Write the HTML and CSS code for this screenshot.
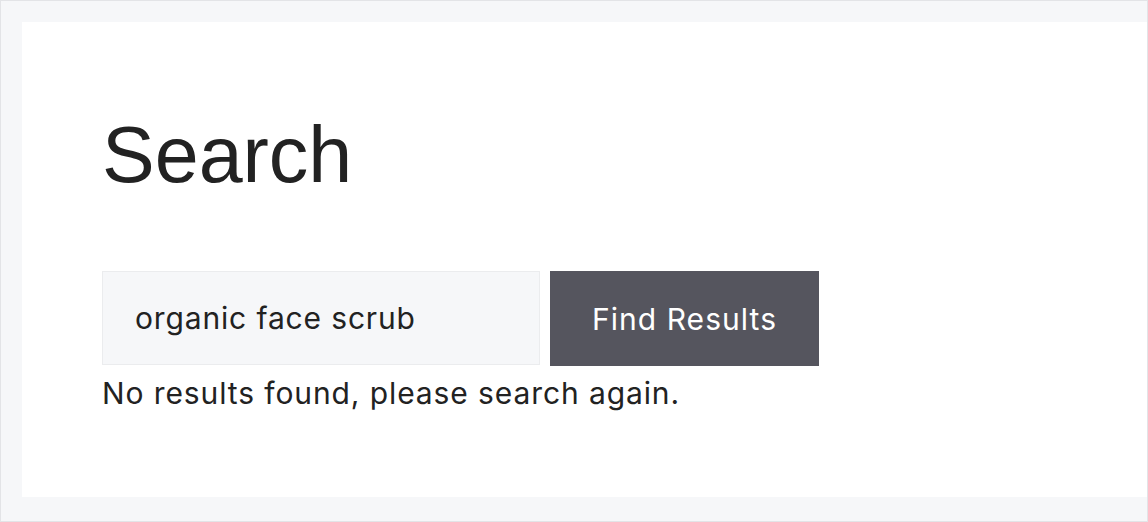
FILE: index.html
```html
<!DOCTYPE html>
<html>
<head>
<meta charset="utf-8">
<link rel="stylesheet" href="styles.css">
</head>
<body>
<div class="frame">
  <main class="card">
    <h1 class="title">Search</h1>
    <form class="search-form">
      <input class="search-input" type="text" value="organic face scrub">
      <button class="search-button" type="button">Find Results</button>
    </form>
    <p class="message">No results found, please search again.</p>
  </main>
</div>
</body>
</html>
```

FILE: styles.css
```css
html, body {
  margin: 0;
  padding: 0;
}
body {
  width: 1148px;
  height: 522px;
  font-family: Inter, "Liberation Sans", Arial, sans-serif;
  color: #222;
  background: #fff;
}
.frame {
  box-sizing: border-box;
  width: 1148px;
  height: 522px;
  border: 1px solid #e3e4e7;
  background: #f6f7f9;
  padding: 21px 0 24px 21px;
  display: flex;
}
.card {
  flex: 1;
  background: #fff;
  padding: 0 0 0 80px;
}
.title {
  margin: 93px 0 0 0;
  font-family: "Liberation Sans", Arial, sans-serif;
  font-size: 79px;
  font-weight: 400;
  line-height: 1;
  color: #222;
}
.search-form {
  display: flex;
  gap: 10px;
  margin-top: 77px;
}
.search-input {
  box-sizing: border-box;
  width: 438px;
  height: 94px;
  border: 1px solid #ebecee;
  background: #f6f7f9;
  padding: 0 0 0 32px;
  font-family: inherit;
  font-size: 30px;
  letter-spacing: 0.85px;
  color: #222;
  outline: none;
}
.search-button {
  box-sizing: border-box;
  width: 269px;
  height: 95px;
  border: 0;
  background: #55555e;
  color: #fff;
  font-family: inherit;
  font-size: 30px;
  letter-spacing: 1.05px;
}
.message {
  margin: 9px 0 0 0;
  font-size: 30px;
  line-height: 36px;
  letter-spacing: 0.9px;
  color: #222;
}
```
